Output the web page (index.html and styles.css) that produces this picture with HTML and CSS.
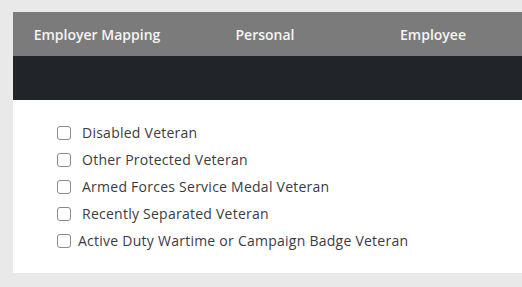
FILE: index.html
```html
<!DOCTYPE html>
<html>
<head>
<meta charset="utf-8">
<link rel="stylesheet" href="styles.css">
</head>
<body>
<div class="card">
  <nav class="tabs">
    <div class="tab">Employer Mapping</div>
    <div class="tab">Personal</div>
    <div class="tab">Employee</div>
  </nav>
  <div class="darkbar"></div>
  <div class="content">
    <label class="row"><input type="checkbox"><span class="lbl">Disabled Veteran</span></label>
    <label class="row"><input type="checkbox"><span class="lbl">Other Protected Veteran</span></label>
    <label class="row"><input type="checkbox"><span class="lbl">Armed Forces Service Medal Veteran</span></label>
    <label class="row"><input type="checkbox"><span class="lbl">Recently Separated Veteran</span></label>
    <label class="row"><input type="checkbox"><span class="lbl tight">Active Duty Wartime or Campaign Badge Veteran</span></label>
  </div>
</div>
</body>
</html>
```
FILE: styles.css
```css
html, body {
  margin: 0;
  padding: 0;
  overflow: hidden;
}
body {
  background: #e9e9e9;
  font-family: "Open Sans", "Liberation Sans", sans-serif;
  padding: 12px 0 0 13px;
}
.card {
  background: #ffffff;
}
.tabs {
  display: flex;
  height: 44px;
  background: #7b7b7b;
}
.tab {
  width: 168px;
  display: flex;
  align-items: center;
  justify-content: center;
  color: #f4f4f4;
  font-size: 14px;
  font-weight: 600;
}
.darkbar {
  height: 44px;
  background: #212428;
}
.content {
  padding: 19px 0 19px 44px;
  display: flex;
  flex-direction: column;
}
.row {
  display: flex;
  align-items: center;
  height: 27px;
  color: #3b3b44;
  font-size: 14px;
  letter-spacing: 0.25px;
}
.row input {
  appearance: none;
  -webkit-appearance: none;
  margin: 0;
  width: 14px;
  height: 14px;
  border: 1px solid #8a8a8a;
  border-radius: 3px;
  background: #fff;
  box-sizing: border-box;
  flex: none;
}
.lbl {
  margin-left: 11px;
}
.lbl.tight {
  margin-left: 7px;
}
```
